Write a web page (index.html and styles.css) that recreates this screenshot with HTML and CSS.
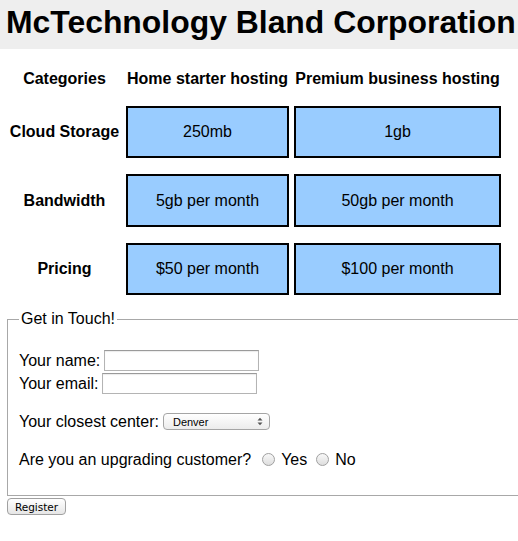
FILE: index.html
```html
<!DOCTYPE html>
<html>
<head>
<meta charset="utf-8">
<link rel="stylesheet" href="styles.css">
<title>McTechnology Bland Corporation</title>
</head>
<body>
<header class="site-header">
  <h1 class="site-title">McTechnology Bland Corporation</h1>
</header>

<div class="plans">
  <div class="plan-head">Categories</div>
  <div class="plan-head">Home starter hosting</div>
  <div class="plan-head">Premium business hosting</div>

  <div class="plan-label">Cloud Storage</div>
  <div class="plan-cell">250mb</div>
  <div class="plan-cell">1gb</div>

  <div class="plan-label">Bandwidth</div>
  <div class="plan-cell">5gb per month</div>
  <div class="plan-cell">50gb per month</div>

  <div class="plan-label">Pricing</div>
  <div class="plan-cell">$50 per month</div>
  <div class="plan-cell">$100 per month</div>
</div>

<form class="contact">
  <fieldset class="contact-set">
    <legend class="contact-legend">Get in Touch!</legend>
    <div class="field-row"><label for="nm">Your name:</label><input id="nm" class="text-input text-name" type="text"></div>
    <div class="field-row"><label for="em">Your email:</label><input id="em" class="text-input text-email" type="text"></div>
    <div class="field-row field-space">
      <label for="ct">Your closest center:</label>
      <span class="select-wrap">
        <select id="ct" class="select-box"><option>Denver</option><option>Boulder</option></select>
        <svg class="select-arrows" width="6" height="9" viewBox="0 0 6 9"><path d="M0.5 3.5 L3 0.8 L5.5 3.5 Z M0.5 5.5 L3 8.2 L5.5 5.5 Z" fill="#555"/></svg>
      </span>
    </div>
    <div class="field-row field-space">
      <span class="question">Are you an upgrading customer?</span>
      <label class="radio-label"><input class="radio" type="radio" name="up">Yes</label>
      <label class="radio-label"><input class="radio" type="radio" name="up">No</label>
    </div>
  </fieldset>
  <button type="button" class="register-btn">Register</button>
</form>
</body>
</html>
```
FILE: styles.css
```css
html, body {
  margin: 0;
  padding: 0;
}
body {
  font-family: "Liberation Sans", Arial, sans-serif;
  font-size: 16px;
  color: #000;
  background: #fff;
}
.site-header {
  background: #eeeeee;
  height: 49px;
  box-sizing: border-box;
  padding: 4px 0 0 6px;
  white-space: nowrap;
  overflow: hidden;
}
.site-title {
  margin: 0;
  font-size: 31.9px;
  line-height: 37px;
  font-weight: bold;
}
.plans {
  display: grid;
  grid-template-columns: 113px 163px 207px;
  grid-template-rows: 22px 52px 53px 52px;
  column-gap: 5px;
  row-gap: 16px;
  margin: 19px 0 0 8px;
}
.plan-head {
  font-weight: bold;
  text-align: center;
  line-height: 22px;
  white-space: nowrap;
}
.plan-label {
  font-weight: bold;
  display: flex;
  align-items: center;
  justify-content: center;
  white-space: nowrap;
}
.plan-cell {
  background: #99ccff;
  border: 2px solid #000;
  display: flex;
  align-items: center;
  justify-content: center;
}
.contact {
  margin: 15px 0 0 7px;
}
.contact-set {
  margin: 0;
  width: calc(100vw - 7px);
  box-sizing: border-box;
  border: 1px solid #a8a8a8;
  border-right: none;
  padding: 21px 0 24px 11px;
}
.contact-legend {
  padding: 0 2px;
  margin-left: 0;
  line-height: 18px;
}
.field-row {
  display: flex;
  align-items: center;
  height: 23px;
}
.field-space {
  margin-top: 15px;
}
.text-input {
  margin: 0 0 0 4px;
  height: 21px;
  box-sizing: border-box;
  border: 1px solid #b4b4b4;
  border-top-color: #9a9a9a;
  box-shadow: inset 0 1px 1px rgba(0,0,0,0.08);
  padding: 2px;
  font-family: inherit;
  font-size: 13px;
}
.text-name { width: 155px; }
.text-email { width: 155px; }
.select-wrap {
  position: relative;
  display: inline-block;
  margin-left: 4px;
  height: 17px;
}
.select-box {
  appearance: none;
  -webkit-appearance: none;
  width: 107px;
  height: 17px;
  box-sizing: border-box;
  border: 1px solid #a5a5a5;
  border-radius: 4px;
  background: linear-gradient(#ffffff, #ececec);
  font-family: "Liberation Sans", Arial, sans-serif;
  font-size: 11px;
  padding: 0 0 0 9px;
  margin: 0;
  color: #000;
  display: block;
}
.select-arrows {
  position: absolute;
  right: 7px;
  top: 4px;
  pointer-events: none;
}
.question {
  margin-right: 11px;
}
.radio-label {
  display: flex;
  align-items: center;
  margin-right: 9px;
}
.radio {
  appearance: none;
  -webkit-appearance: none;
  width: 13px;
  height: 13px;
  margin: 0 6px 0 0;
  border: 1px solid #a0a0a0;
  border-radius: 50%;
  background: linear-gradient(#f8f8f8, #dedede);
  box-sizing: border-box;
}
.register-btn {
  margin: 2px 0 0 0;
  width: 59px;
  height: 17px;
  box-sizing: border-box;
  padding: 0;
  border: 1px solid #a0a0a0;
  border-radius: 4px;
  background: linear-gradient(#ffffff, #e6e6e6);
  font-family: "DejaVu Sans", sans-serif;
  font-size: 10.5px;
  line-height: 14px;
  color: #000;
}
```
